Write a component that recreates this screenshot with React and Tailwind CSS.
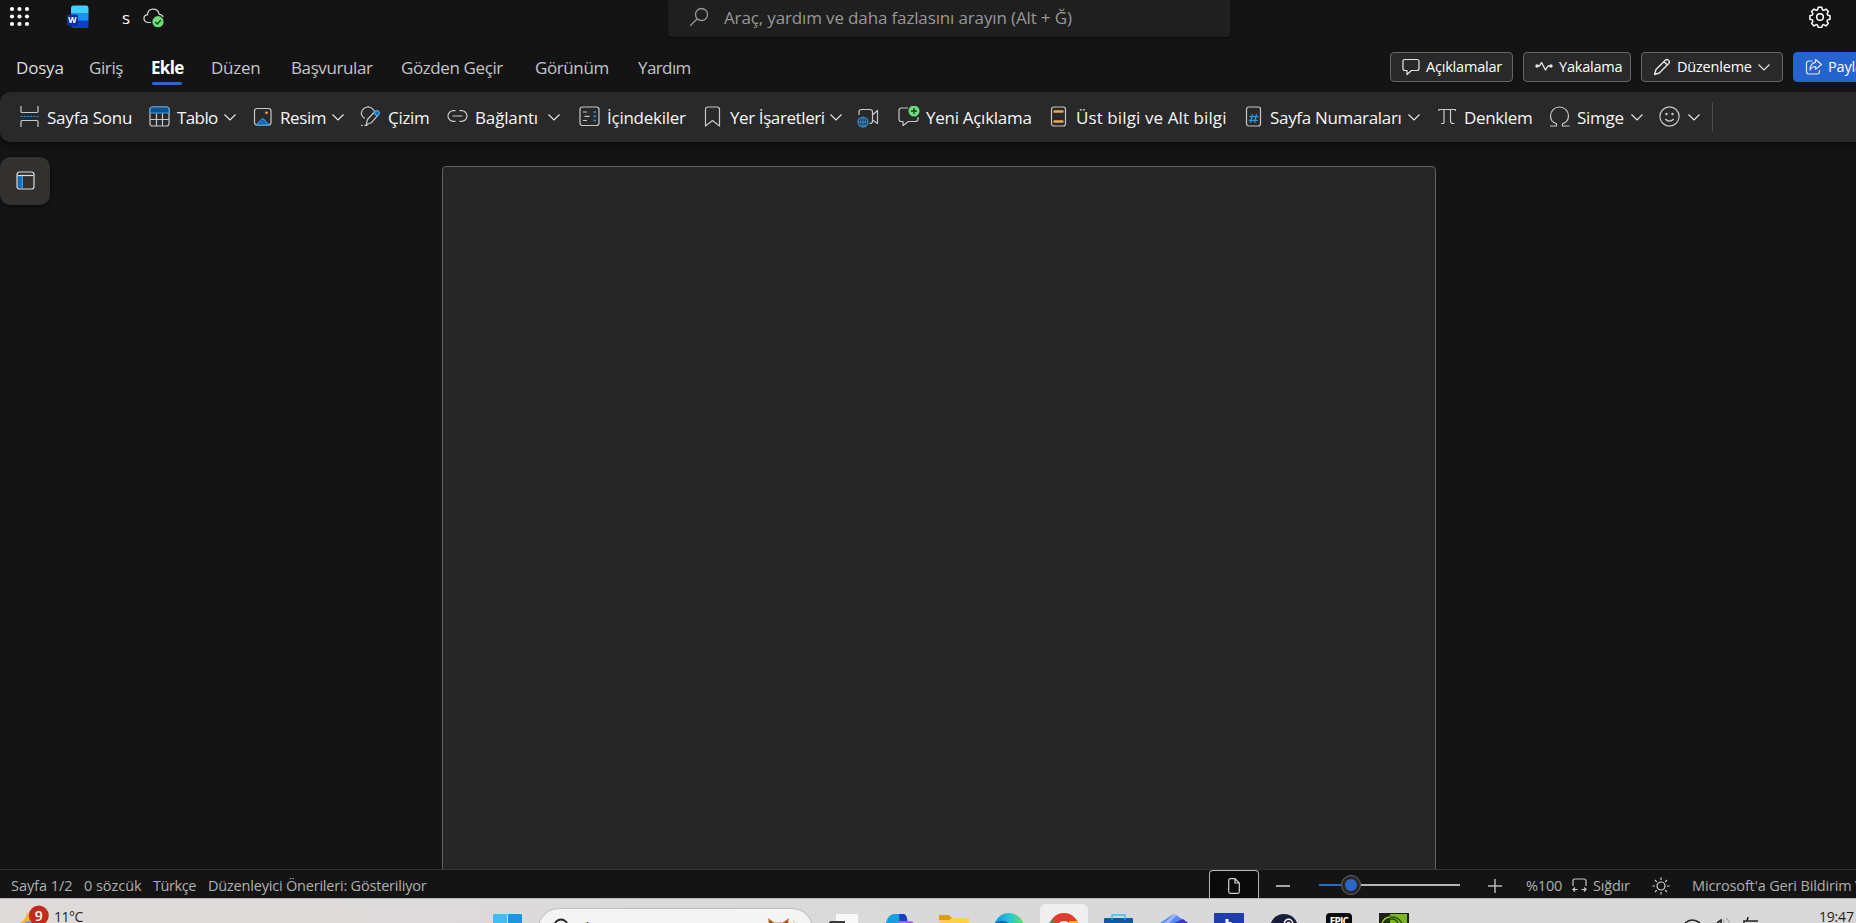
import clsx from "clsx";

const LINE = "#c8c8c8";

function Chevron({ className }) {
  return (
    <svg className={clsx("h-[7px] w-3 shrink-0", className)} viewBox="0 0 12 7" fill="none" stroke="#e6e6e6" strokeWidth="1.2">
      <path d="M.5.5 6 6 11.5.5" />
    </svg>
  );
}

function Icon({ children, className = "size-[22px]", box = "0 0 22 22" }) {
  return (
    <svg className={clsx("shrink-0", className)} viewBox={box} fill="none" stroke={LINE} strokeWidth="1.2" strokeLinejoin="round">
      {children}
    </svg>
  );
}

const PageBreakIcon = () => (
  <Icon>
    <path d="M2 0v5.5q0 1 1 1h15q1 0 1-1V0M2 21v-5.5q0-1 1-1h15q1 0 1 1V21" />
    <path d="M1.5 10.5h19" stroke="#2f8fd6" strokeDasharray="2 1.2" />
  </Icon>
);

const TableIcon = () => (
  <Icon>
    <rect x="1" y="1" width="19" height="19" rx="2.5" />
    <path d="M1 7V3.5Q1 1 3.5 1h14Q20 1 20 3.5V7z" fill="#0c5290" stroke="#4a9bd8" />
    <path d="M1 13.5h19M7.5 7.5v12.5M13.5 7.5v12.5" />
  </Icon>
);

const PictureIcon = () => (
  <Icon>
    <rect x="2.5" y="2.5" width="16.5" height="16.5" rx="2.5" />
    <path d="m4 19 5.7-6q1-1 2 0l5.8 6z" fill="#0f6cbd" stroke="#5fb0ee" strokeWidth=".8" />
    <circle cx="14.5" cy="6.8" r="1.4" fill="#f2a04a" stroke="none" />
  </Icon>
);

const DrawIcon = () => (
  <Icon>
    <path d="M5 12.5C1 10.5.5 7 2.5 4S8 .4 10.5 1.5c2 .8 3 2 3.5 3.5" />
    <path d="m7.5 13.5 7.5-8c1.5-1.5 5 1 3.5 3.2l-7.3 8.1-5 2 1.3-5.3z" />
    <path d="M14 6.7 16 5c1.8-1.3 4.6 1.2 3 3.2l-2 2.1z" fill="#0f6cbd" stroke="#4aa3e8" />
    <path d="M1 19.3h1.6M4.5 19.3h3" />
  </Icon>
);

const LinkIcon = () => (
  <Icon>
    <path d="M8.5 4.7H6.3a5 5 0 0 0 0 10.6h2.2M12.5 4.7h2.2a5 5 0 0 1 0 10.6h-2.2M5.5 10h10" />
  </Icon>
);

const ContentsIcon = () => (
  <Icon>
    <rect x="1" y="1" width="19" height="18.5" rx="2.5" />
    <path d="M4 6h4M5.5 10.3h5M4 14.5h4" />
    <path d="M14.5 6H17M14.5 10.3H17M14.5 14.5H17" stroke="#2f8fd6" strokeWidth="1.5" />
  </Icon>
);

const BookmarkIcon = () => (
  <Icon>
    <path d="M4.5 20V3.5Q4.5 1 7 1h9q2.5 0 2.5 2.5V20l-7-5.5z" />
  </Icon>
);

const OnlineVideoIcon = () => (
  <Icon>
    <path d="M2 9V6q0-2.5 2.5-2.5H13q2.5 0 2.5 2.5v9q0 2.500-2.500 2.500h-.5M15.500 9l5-4.500v13L15.500 14" />
    <g stroke="#2f8fd6">
      <circle cx="6" cy="16" r="5" />
      <path d="M1 16h10M6 11v10M6 11c-3.200 3-3.200 7 0 10M6 11c3.200 3 3.200 7 0 10" strokeWidth="1" />
    </g>
  </Icon>
);

const NewCommentIcon = () => (
  <Icon>
    <path d="M10 2H3.500Q1 2 1 4.500V13q0 2.500 2.500 2.500H5v4l5.500-4h7q2.500 0 2.500-2.500v-2" />
    <circle cx="16" cy="5" r="5.500" fill="#6fdc7c" stroke="none" />
    <path d="M16 2v6M13 5h6" stroke="#1f3a23" strokeWidth="1.4" />
  </Icon>
);

const HeaderFooterIcon = () => (
  <Icon>
    <rect x="3.500" y="1" width="14" height="19" rx="2.200" />
    <path d="M6.500 5.500h8M6.500 15.500h8" stroke="#e9a94f" strokeWidth="2.400" strokeLinecap="round" />
  </Icon>
);

const PageNumberIcon = () => (
  <Icon>
    <rect x="3.500" y="1" width="14" height="19" rx="2.200" />
    <path d="m9.500 8-2 9M13.500 8l-2 9M6.500 10.700h9M5.800 14.300h9" stroke="#2f9ae6" />
  </Icon>
);

const PiIcon = () => (
  <Icon>
    <path d="M1.800 5V3.500h16.700V5M7 3.500v14M4 17.500h3M13.500 3.500V15q0 2.500 2.500 2.500h1.500" />
  </Icon>
);

const OmegaIcon = () => (
  <Icon>
    <path d="M1 20h6.500v-2.200C3.500 16.500 1.500 13.500 1.500 10a9 9 0 0 1 18 0c0 3.500-2 6.500-6 7.800V20h7" />
  </Icon>
);

const SmileIcon = () => (
  <Icon>
    <circle cx="10.500" cy="10.500" r="9.600" />
    <circle cx="7.500" cy="8" r="1.200" fill={LINE} stroke="none" />
    <circle cx="13.500" cy="8" r="1.200" fill={LINE} stroke="none" />
    <path d="M6.300 13c2.200 2.700 6.200 2.700 8.400 0" />
  </Icon>
);

const CommentIcon = () => (
  <Icon className="size-[18px]" box="0 0 18 18">
    <path d="M3 1.500h12q2 0 2 2v7q0 2-2 2H9.500l-4.500 4v-4H3q-2 0-2-2v-7q0-2 2-2z" stroke="#e6e6e6" />
  </Icon>
);

const CatchUpIcon = () => (
  <Icon className="size-[18px]" box="0 0 18 18">
    <circle cx="2" cy="8" r="1.700" fill="#e6e6e6" stroke="none" />
    <circle cx="16" cy="8" r="1.700" fill="#e6e6e6" stroke="none" />
    <path d="M2 8h2.500l2-3.500 4 7.500L13 8h3" stroke="#e6e6e6" strokeWidth="1.400" />
  </Icon>
);

const PencilIcon = () => (
  <Icon className="size-[18px]" box="0 0 18 18">
    <path d="M1.500 16.500 3 11.500 12.300 2.200c2-1.900 5.300 1.200 3.400 3.300L6.300 15zM11 3.600l3.300 3.300" stroke="#e6e6e6" strokeWidth="1.400" />
  </Icon>
);

const ShareIcon = () => (
  <Icon className="size-[18px]" box="0 0 18 18">
    <path
      d="M7.500 3H4Q1.500 3 1.500 5.500v8Q1.500 16 4 16h8q2.500 0 2.500-2.500V12M10.500 1.500l6 5-6 4.700V8.500C8 8.500 6.300 9.500 5 12c.2-4 2-7.200 5.500-7.700z"
      stroke="#e6e6e6"
    />
  </Icon>
);

function Tool({ className, icon, label, labelClass, chevron }) {
  return (
    <div className={clsx("flex shrink-0 items-center", className)}>
      {icon}
      {label && <span className={clsx("shrink-0 pt-px", labelClass)}>{label}</span>}
      {chevron && <Chevron className={chevron} />}
    </div>
  );
}

function TopBar() {
  return (
    <header className="flex h-[37px] shrink-0 items-start">
      <svg className="mt-[6px] ml-[9px] size-[21px]" viewBox="0 0 21 21" fill="#fff">
        {[3, 10.5, 18].map((y) => [3, 10.5, 18].map((x) => <circle key={`${x}-${y}`} cx={x} cy={y} r="2.1" />))}
      </svg>
      <svg className="mt-[5px] ml-[37px] h-[24px] w-[22px]" viewBox="0 0 22 24">
        <path d="M4 8V3Q4 .5 6.500.5h13Q21.500.5 21.500 3v5.500z" fill="#3fd0fb" />
        <path d="M4 8h17.500v8H4z" fill="#1593ee" />
        <path d="M4 15.500h17.500v5q0 2.500-2.500 2.500H6.500Q4 23 4 20.500z" fill="#0a3fcf" />
        <rect x="0" y="9.500" width="11" height="11.500" rx="2" fill="#0b2f9c" />
        <text x="5.400" y="18" textAnchor="middle" fontSize="8.500" fontWeight="700" fill="#fff">W</text>
      </svg>
      <span className="mt-[6px] ml-[33px] w-[8px] text-[17px] leading-6 text-white">s</span>
      <svg className="mt-[7px] ml-[13px] h-[22px] w-[22px]" viewBox="0 0 22 22" fill="none">
        <path d="M8 15.500H5.500C-.5 15-.2 8.500 4.500 7.700 5 .3 15 .3 16.200 7.300c1.800 0 3.300 1 4 2.700" stroke="#d6d6d6" strokeWidth="1.200" />
        <circle cx="15" cy="14.700" r="5.600" fill="#6fdc7c" />
        <path d="m12.300 15 2 2 3.600-4" stroke="#173a1c" strokeWidth="1.300" />
      </svg>
      <div className="ml-[503px] flex h-[37px] w-[562px] rounded-b bg-[#1f1f1f] text-[#979797] shadow-[0_1px_2px_#0008]">
        <svg className="mt-[7px] ml-[21px] size-5" viewBox="0 0 20 20" fill="none" stroke="#979797" strokeWidth="1.300">
          <circle cx="12.500" cy="7.500" r="6" />
          <path d="M8.300 11.700 1.200 18.800" />
        </svg>
        <span className="mt-[6px] ml-[15px] text-[17px] leading-6 tracking-[-0.14px]">Araç, yardım ve daha fazlasını arayın (Alt + Ğ)</span>
      </div>
      <svg className="mt-[6px] ml-[579px] size-[22px]" viewBox="0 0 22 22" fill="none" stroke="#fff" strokeWidth="1.500" strokeLinejoin="round">
        <path d="M9.300 1.300h3.400l.7 2.500 1.300.6 2.300-1.300 2.400 2.400-1.300 2.300.5 1.300 2.400.7v3.400l-2.400.7-.6 1.300 1.300 2.300-2.400 2.400-2.300-1.300-1.200.5-.7 2.500H9.300l-.7-2.500-1.300-.5L5 19.900l-2.400-2.400 1.300-2.300-.6-1.300-2.400-.7V9.800l2.400-.7.600-1.300-1.300-2.300L5 3.100l2.300 1.300 1.300-.6z" />
        <circle cx="11" cy="11" r="3.300" />
      </svg>
    </header>
  );
}

const TABS = [
  { name: "Dosya", className: "ml-[16px] w-[47px] text-[#dedede] tracking-[-0.2px]" },
  { name: "Giriş", className: "ml-[26px] w-[34px]" },
  { name: "Ekle", className: "ml-[28px] w-[33px] font-bold text-white tracking-[-0.7px]" },
  { name: "Düzen", className: "ml-[27px] w-[50px] tracking-[-0.25px]" },
  { name: "Başvurular", className: "ml-[30px] w-[80px]" },
  { name: "Gözden Geçir", className: "ml-[30px] w-[104px]" },
  { name: "Görünüm", className: "ml-[30px] w-[73px]" },
  { name: "Yardım", className: "ml-[30px] w-[53px] tracking-[-0.6px]" },
];

function ActionButton({ className, children }) {
  return (
    <button className={clsx("flex h-[30px] shrink-0 items-center rounded border pl-[11px] text-left text-[14.5px] tracking-[-0.2px] text-white", className)}>
      {children}
    </button>
  );
}

function TabRow() {
  return (
    <nav className="flex h-[55px] shrink-0 items-start pt-[15px]">
      <div className="flex w-[1390px] shrink-0 text-[17px] tracking-[-0.4px] text-[#c4c4c4]">
        {TABS.map((tab) => (
          <div key={tab.name} className={clsx("shrink-0", tab.className)}>
            <div className="h-[30px] pt-px leading-[30px]">{tab.name}</div>
            {tab.name === "Ekle" && <div className="ml-px h-[3px] w-[30px] rounded-full bg-[#2b68c8]" />}
          </div>
        ))}
      </div>
      <ActionButton className="w-[123px] border-[#666] bg-[#292929]">
        <CommentIcon />
        <span className="ml-[6px]">Açıklamalar</span>
      </ActionButton>
      <ActionButton className="ml-[10px] w-[108px] border-[#666] bg-[#292929]">
        <CatchUpIcon />
        <span className="ml-[6px]">Yakalama</span>
      </ActionButton>
      <ActionButton className="ml-[10px] w-[142px] border-[#666] bg-[#292929]">
        <PencilIcon />
        <span className="ml-[6px] w-[75px]">Düzenleme</span>
        <Chevron className="ml-[6px]" />
      </ActionButton>
      <ActionButton className="ml-[10px] w-[110px] border-[#2563cf] bg-[#2563cf]">
        <ShareIcon />
        <span className="ml-[5px]">Paylaş</span>
      </ActionButton>
    </nav>
  );
}

function Ribbon() {
  return (
    <div className="flex h-[50px] w-[1870px] shrink-0 items-center rounded-[10px] bg-[#292929] text-[17px] leading-6 tracking-[-0.3px] whitespace-nowrap text-[#f6f6f6] shadow-[0_2px_5px_#000a]">
      <Tool className="ml-[19px]" icon={<PageBreakIcon />} label="Sayfa Sonu" labelClass="ml-[6px] w-[85px] tracking-[-0.2px]" />
      <Tool className="ml-[17px]" icon={<TableIcon />} label="Tablo" labelClass="ml-[6px] w-[41px] tracking-[-0.6px]" chevron="ml-[6px]" />
      <Tool className="ml-[16px]" icon={<PictureIcon />} label="Resim" labelClass="ml-[6px] w-[45px] tracking-[-0.4px]" chevron="ml-[7px]" />
      <Tool className="ml-[16px]" icon={<DrawIcon />} label="Çizim" labelClass="ml-[6px] w-[42px]" />
      <Tool className="ml-[17px]" icon={<LinkIcon />} label="Bağlantı" labelClass="ml-[6px] w-[62px] tracking-[-0.15px]" chevron="ml-[11px]" />
      <Tool className="ml-[19px]" icon={<ContentsIcon />} label="İçindekiler" labelClass="ml-[6px] w-[79px] tracking-[-0.25px]" />
      <Tool className="ml-[15px]" icon={<BookmarkIcon />} label="Yer İşaretleri" labelClass="ml-[7px] w-[94px] tracking-[-0.4px]" chevron="ml-[6px]" />
      <Tool className="ml-[15px]" icon={<OnlineVideoIcon />} />
      <Tool className="ml-[19px]" icon={<NewCommentIcon />} label="Yeni Açıklama" labelClass="ml-[6px] w-[106px] tracking-[-0.28px]" />
      <Tool className="ml-[16px]" icon={<HeaderFooterIcon />} label="Üst bilgi ve Alt bilgi" labelClass="ml-[6px] w-[150px] tracking-[0.1px]" />
      <Tool className="ml-[17px]" icon={<PageNumberIcon />} label="Sayfa Numaraları" labelClass="ml-[5px] w-[132px] tracking-[-0.32px]" chevron="ml-[6px]" />
      <Tool className="ml-[17px]" icon={<PiIcon />} label="Denklem" labelClass="ml-[5px] w-[68px] tracking-[-0.35px]" />
      <Tool className="ml-[17px]" icon={<OmegaIcon />} label="Simge" labelClass="ml-[6px] w-[48px]" chevron="ml-[6px]" />
      <Tool className="ml-[16px]" icon={<SmileIcon />} chevron="ml-[7px]" />
      <div className="ml-[12px] h-[30px] w-px bg-[#4a4a4a]" />
    </div>
  );
}

function Workspace() {
  return (
    <main className="flex min-h-0 flex-1 items-start overflow-hidden">
      <button className="mt-[15px] flex h-[48px] w-[50px] shrink-0 rounded-[10px] bg-[#32312f] shadow-[0_1px_4px_#000a]">
        <svg className="mt-[14px] ml-[16px] size-[19px]" viewBox="0 0 19 19" fill="none">
          <path d="M1.500 5H6v12.500H4Q1.500 17.500 1.500 15z" fill="#0f6cbd" />
          <rect x="1" y="1" width="17" height="17" rx="2.500" stroke="#dcdcdc" strokeWidth="1.200" />
          <path d="M1.500 4.500h16" stroke="#dcdcdc" strokeWidth="1.200" />
          <path d="M6.300 5v12.500" stroke="#5fb0ee" />
        </svg>
      </button>
      <div className="mt-[24px] ml-[392px] h-[740px] w-[994px] shrink-0 rounded border border-[#616161] bg-[#262626]" />
    </main>
  );
}

function StatusBar() {
  return (
    <footer className="flex h-[29px] shrink-0 items-center overflow-hidden border-t border-[#333] text-[14.5px] leading-6 tracking-[-0.2px] whitespace-nowrap text-[#b0b0b0]">
      <span className="ml-[11px] w-[61px] shrink-0 pt-[3px] tracking-[-0.05px]">Sayfa 1/2</span>
      <span className="ml-[12px] w-[58px] shrink-0 pt-[3px] tracking-[-0.05px]">0 sözcük</span>
      <span className="ml-[11px] w-[43px] shrink-0 pt-[3px] tracking-[-0.4px]">Türkçe</span>
      <span className="ml-[12px] w-[218px] shrink-0 pt-[3px]">Düzenleyici Önerileri: Gösteriliyor</span>
      <div className="ml-[783px] flex h-[28px] w-[50px] shrink-0 justify-center rounded-t border border-b-0 border-[#b5b5b5] bg-[#0a0a0a] pt-[7px]">
        <svg className="h-[16px] w-[12px]" viewBox="0 0 12 16" fill="none" stroke="#d0d0d0" strokeWidth="1.200">
          <path d="M7 .7H2.500Q.7.700.7 2.500v11q0 1.800 1.800 1.800h7q1.800 0 1.800-1.800V5zM7 .7V5h4.300" />
        </svg>
      </div>
      <div className="mt-[3px] ml-[17px] h-[2px] w-[14px] shrink-0 bg-[#a8a8a8]" />
      <div className="mt-[2px] ml-[29px] flex h-5 w-[141px] shrink-0 items-center">
        <div className="h-[2px] w-[22px] bg-[#2b68c8]" />
        <div className="flex size-5 shrink-0 items-center justify-center rounded-full border border-[#666] bg-[#292929]">
          <div className="size-3 rounded-full bg-[#2b68c8]" />
        </div>
        <div className="h-[2px] flex-1 bg-[#b5b5b5]" />
      </div>
      <svg className="mt-[4px] ml-[28px] size-[14px] shrink-0" viewBox="0 0 14 14" stroke="#b5b5b5" strokeWidth="1.500">
        <path d="M0 7h14M7 0v14" />
      </svg>
      <span className="ml-[24px] w-[37px] shrink-0 pt-[3px]">%100</span>
      <svg className="mt-[2px] ml-[9px] h-[14px] w-[15px] shrink-0" viewBox="0 0 15 14" fill="none" stroke="#c8c8c8" strokeWidth="1.200">
        <path d="M1 8V3q0-2 2-2h9q2 0 2 2v5M.500 11.500h5M9.500 11.500h5M3 9.500l-2 2 2 2M12 9.500l2 2-2 2" />
      </svg>
      <span className="ml-[6px] w-[38px] shrink-0 pt-[3px]">Sığdır</span>
      <svg className="mt-[3px] ml-[21px] size-[18px] shrink-0" viewBox="0 0 18 18" fill="none" stroke="#d0d0d0" strokeWidth="1.200">
        <circle cx="9" cy="9" r="4" />
        <path d="M9 .5V3M9 15v2.500M.5 9H3M15 9h2.500M3 3l1.800 1.800M13.200 13.200 15 15M15 3l-1.800 1.800M3 15l1.800-1.800" />
      </svg>
      <span className="ml-[22px] shrink-0 pt-[3px] tracking-[-0.15px]">Microsoft'a Geri Bildirim Ver</span>
    </footer>
  );
}

function Taskbar() {
  return (
    <div className="flex h-[25px] shrink-0 items-start overflow-hidden border-t border-[#bdb9b9] bg-gradient-to-r from-[#e0dbdb] via-[#d9d9d9] to-[#d8d8d8] text-[#1f1f1f]">
      <svg className="ml-[19px] h-[24px] w-[31px] shrink-0" viewBox="0 0 31 24">
        <path d="M1 24Q7 21 8 13q4 5 8 11z" fill="#f7b52c" />
        <path d="M5 24q5-4 9 0z" fill="#5a9cf0" />
        <circle cx="19.800" cy="16.500" r="10" fill="#c42b1c" />
        <text x="19.800" y="21.500" textAnchor="middle" fontSize="14" fontWeight="600" fill="#fff">9</text>
      </svg>
      <span className="mt-[8px] ml-[4px] w-[28px] shrink-0 text-[14px] leading-5 tracking-[-0.5px] whitespace-nowrap">11°C</span>
      <svg className="mt-[15px] ml-[411px] h-[9px] w-[29px] shrink-0" viewBox="0 0 29 9">
        <path d="M0 1q0-1 1-1h13v9H0z" fill="#3fbdf5" />
        <path d="M15 0h13q1 0 1 1v8H15z" fill="#1d96e2" />
      </svg>
      <div className="mt-[10px] ml-[17px] flex h-[40px] w-[273px] shrink-0 items-start rounded-full bg-[#f4f4f4] shadow-[0_0_1px_1px_#0002]">
        <svg className="mt-[9px] ml-[14px] size-[18px]" viewBox="0 0 18 18" fill="none" stroke="#222" strokeWidth="1.800">
          <circle cx="8" cy="8" r="6.500" />
        </svg>
        <span className="mt-[8px] ml-[12px] w-[50px] text-[14px] leading-5">Ara</span>
        <svg className="mt-[8px] ml-[127px] h-[12px] w-[44px]" viewBox="0 0 44 12">
          <path d="M8 1 14.500 5.500h8L29 1l-1.500 11h-18z" fill="#c9793f" />
          <path d="M9.500 3.500 13 6.500l-3 4zM27.500 3.500 24 6.500l3 4z" fill="#6b3c2a" />
          <path d="M31 12V5M34 12V3M37 12V5M41 12V7M3 12V8" stroke="#d8cf86" />
        </svg>
      </div>
      <svg className="mt-[15px] ml-[17px] h-[9px] w-[29px] shrink-0" viewBox="0 0 29 9">
        <rect x="7" width="22" height="12" rx="1" fill="#f8f8f8" />
        <path d="M1 7h15v2H0z" fill="#3a3a3a" />
      </svg>
      <svg className="mt-[15px] ml-[28px] h-[9px] w-[28px] shrink-0" viewBox="0 0 28 9">
        <path d="M0 9Q2 0 9 0h9l-5 9z" fill="#159fe0" />
        <path d="M13 0h5q3 1 3.500 7h-8z" fill="#1740c8" />
        <path d="M12 9q1-2 3-2h9q3 0 3.500 2z" fill="#a463f0" />
      </svg>
      <svg className="mt-[16px] ml-[25px] h-[8px] w-[30px] shrink-0" viewBox="0 0 30 8">
        <path d="M0 1q0-1 1-1h9l3 3h16q1 0 1 1v4H0z" fill="#dd9b0d" />
        <path d="M0 5h10l3-2h16q1 0 1 1v4H0z" fill="#ffcf4d" />
      </svg>
      <svg className="mt-[14px] ml-[25px] h-[10px] w-[30px] shrink-0" viewBox="0 0 30 10">
        <defs>
          <linearGradient id="edge">
            <stop offset="0" stopColor="#1a8ee0" />
            <stop offset=".5" stopColor="#27c3d8" />
            <stop offset="1" stopColor="#5fe05a" />
          </linearGradient>
        </defs>
        <circle cx="15" cy="15" r="15" fill="url(#edge)" />
        <path d="M1 10q5-4 12-1l2 1z" fill="#0f6cbd" />
      </svg>
      <div className="mt-[5px] ml-[16px] h-[30px] w-[48px] shrink-0 rounded-md bg-[#efefef]">
        <svg className="mt-[9px] ml-[9px] h-[10px] w-[30px]" viewBox="0 0 30 10">
          <circle cx="15" cy="15" r="15" fill="#e33b2e" />
          <path d="M0 10 3 7l3 3z" fill="#2ba24c" />
          <path d="M20 8h8.500l.5 2h-9z" fill="#fbc116" />
          <circle cx="15" cy="15.500" r="7.500" fill="#fff" />
          <circle cx="15" cy="15.500" r="5.800" fill="#3f83f0" />
        </svg>
      </div>
      <svg className="mt-[15px] ml-[16px] h-[9px] w-[29px] shrink-0" viewBox="0 0 29 9">
        <rect y="4" width="29" height="9" rx="1" fill="#10589f" />
        <path d="M8 5.500V1.500q0-.5.500-.5h12q.5 0 .5.500v4" fill="none" stroke="#2cc3f5" strokeWidth="1.600" />
      </svg>
      <svg className="mt-[15px] ml-[27px] h-[9px] w-[28px] shrink-0" viewBox="0 0 28 9">
        <path d="m0 9 12-8q2-1 4 0l12 8z" fill="#4f8df5" />
        <path d="m14 9 9-4 5 4z" fill="#4233c2" />
        <path d="m4 9 9-8q2-1 4 0L9 9z" fill="#a9b4fb" />
      </svg>
      <svg className="mt-[14px] ml-[26px] h-[10px] w-[30px] shrink-0" viewBox="0 0 30 10">
        <path d="M0 0h30v10H0z" fill="#1f3eae" />
        <path d="M11.500 6h3v3h3v1h-6z" fill="#fff" />
      </svg>
      <svg className="mt-[15px] ml-[26px] h-[9px] w-[28px] shrink-0" viewBox="0 0 28 9">
        <circle cx="14" cy="14" r="14" fill="#161d3d" />
        <circle cx="18.500" cy="9.500" r="4.200" fill="none" stroke="#fff" strokeWidth="1.500" />
        <circle cx="18.500" cy="9.500" r="2" fill="#ddd" />
      </svg>
      <div className="mt-[14px] ml-[28px] h-[20px] w-[26px] shrink-0 rounded-sm bg-[#0b0b0b] pt-[3px] text-center text-[10px] leading-[10px] font-bold tracking-[-0.8px] text-white">
        EPIC
      </div>
      <svg className="mt-[14px] ml-[27px] h-[10px] w-[30px] shrink-0" viewBox="0 0 30 10">
        <path d="M0 0h30v10H0z" fill="#1c1f1c" />
        <path d="M11 1h17v9H11z" fill="#79b81c" />
        <path d="M3 10q3-6 10-6 6 0 10 6M7 10q2-4 6-4 4 0 6 4" fill="none" stroke="#2d4a08" strokeWidth="1.300" />
        <path d="M3 10q3-6 8-6" fill="none" stroke="#8fd32a" strokeWidth="1.300" />
      </svg>
      <svg className="mt-[18px] ml-[275px] h-[6px] w-[78px] shrink-0" viewBox="0 0 78 6" fill="none" stroke="#222" strokeWidth="1.600">
        <path d="M1 6q7-6 15 0M33 6l4-3v3M60 6V4h14M63 4l1-4" />
        <path d="M42 1q3 2 3 5M39 3q1 1 1 3" stroke="#aaa" strokeWidth="1.200" />
      </svg>
      <span className="mt-[8px] ml-[57px] shrink-0 text-[14px] leading-5 tracking-[-0.2px]">19:47</span>
    </div>
  );
}

export default function App() {
  return (
    <div className="flex h-[923px] w-full flex-col overflow-hidden bg-[#141414] font-['Open_Sans','Noto_Sans',sans-serif]">
      <TopBar />
      <TabRow />
      <Ribbon />
      <Workspace />
      <StatusBar />
      <Taskbar />
    </div>
  );
}
